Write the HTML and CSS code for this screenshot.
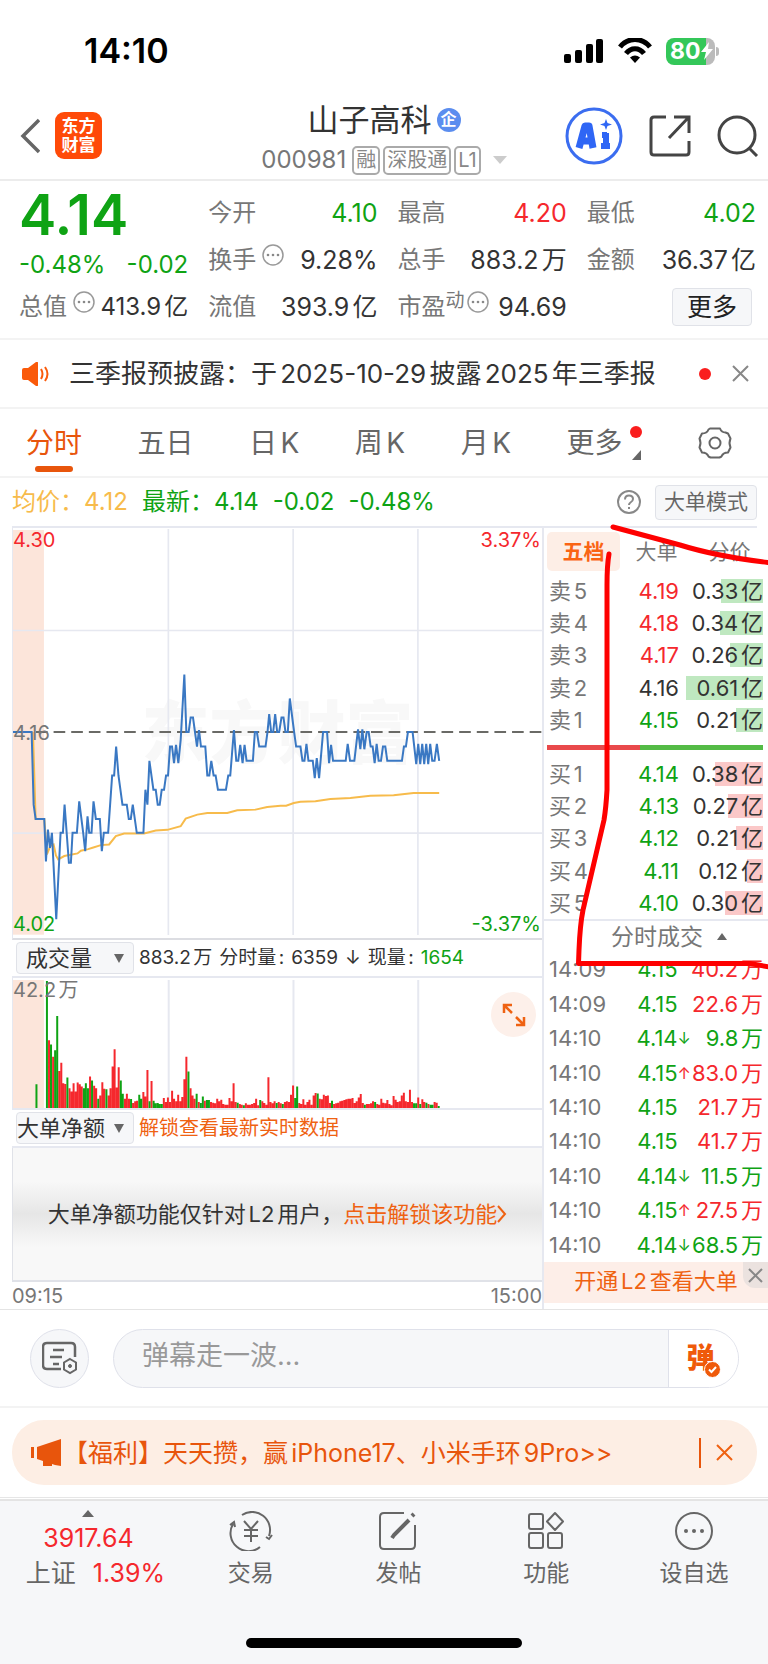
FILE: index.html
```
<!DOCTYPE html>
<html lang="zh-CN">
<head>
<meta charset="utf-8">
<meta name="viewport" content="width=device-width, initial-scale=1">
<title>山子高科 000981</title>
<link rel="stylesheet" href="styles.css">
</head>
<body>
<div class="statusbar">
  <span class="clock">14:10</span>
  <div class="status-icons">
    <svg width="40" height="26" viewBox="0 0 40 26"><rect x="0" y="16" width="7" height="9" rx="2"/><rect x="11" y="12" width="7" height="13" rx="2"/><rect x="22" y="6" width="7" height="19" rx="2"/><rect x="32" y="1" width="7" height="24" rx="2"/></svg>
    <svg width="34" height="26" viewBox="0 0 34 26" fill="none" stroke="#000" stroke-width="5"><path d="M2 9C10-1 24-1 32 9"/><path d="M8 15.500C13 9 21 9 26 15.500"/><path d="M17 25l-5-5.500q5-4 10 0z" fill="#000" stroke="none"/></svg>
    <span class="battery"><span>80</span><svg width="12" height="18" viewBox="0 0 12 18"><path d="M8 0L0 10h5L3 18 12 7H7z" fill="#fff"/></svg></span>
  </div>
</div>

<header class="header">
  <div class="header-left">
    <button class="icon-btn" aria-label="返回"><svg width="20" height="36" viewBox="0 0 20 36" fill="none" stroke="#666" stroke-width="3.500"><path d="M19 2L3 18l16 16"/></svg></button>
    <span class="logo"><span>东方</span><span>财富</span></span>
  </div>
  <div class="titles">
    <h1 class="title">山子高科<span class="qi">企</span></h1>
    <div class="code">000981<span class="tags"><span class="tag">融</span><span class="tag">深股通</span><span class="tag">L1</span></span><svg class="drop" width="14" height="8" viewBox="0 0 14 8"><path d="M0 0h14L7 8z" fill="#ccc"/></svg></div>
  </div>
  <div class="header-right">
    <button class="icon-btn" aria-label="AI"><svg width="58" height="58" viewBox="0 0 58 58"><circle cx="29" cy="29" r="27" fill="#fff" stroke="#3b6df0" stroke-width="3"/><g fill="none" stroke="#2f66f5" stroke-linejoin="round"><path d="M14 41l6-22h4l4 22M16 34h10" stroke-width="7"/><path d="M41 26v14M37 28h5M36 39h9" stroke-width="6"/></g><path d="M41 12l1.500 4L47 17.500 42.500 19 41 23l-1.500-4-4.500-1.500 4.500-1.500z" fill="#2f66f5"/></svg></button>
    <button class="icon-btn" aria-label="分享"><svg width="42" height="42" viewBox="0 0 42 42" fill="none" stroke="#444" stroke-width="3"><path d="M17 2H5q-3 0-3 3v32q0 3 3 3h32q3 0 3-3V26M25 2h15v16M39 3L20 23"/></svg></button>
    <button class="icon-btn" aria-label="搜索"><svg width="42" height="42" viewBox="0 0 42 42" fill="none" stroke="#444" stroke-width="3"><circle cx="20" cy="20" r="18"/><path d="M32 33l8 8"/></svg></button>
  </div>
</header>

<section class="quote">
  <div class="price-block down">
    <div class="price">4.14</div>
    <div class="change"><span>-0.48%</span><span>-0.02</span></div>
  </div>
  <div class="stat"><span class="label">今开</span><span class="down">4.10</span></div>
  <div class="stat"><span class="label">最高</span><span class="up">4.20</span></div>
  <div class="stat"><span class="label">最低</span><span class="down">4.02</span></div>
  <div class="stat"><span class="label">换手<svg class="dots"><use href="#i-dots"/></svg></span><span>9.28%</span></div>
  <div class="stat"><span class="label">总手</span><span>883.2万</span></div>
  <div class="stat"><span class="label">金额</span><span>36.37亿</span></div>
  <div class="stat stat-small"><span class="label">总值<svg class="dots"><use href="#i-dots"/></svg></span><span>413.9亿</span></div>
  <div class="stat"><span class="label">流值</span><span>393.9亿</span></div>
  <div class="stat"><span class="label">市盈<span class="sup">动</span><svg class="dots"><use href="#i-dots"/></svg></span><span>94.69</span></div>
  <div class="stat stat-end"><button class="btn btn-more">更多</button></div>
</section>

<section class="notice">
  <svg width="27" height="24" viewBox="0 0 27 24"><path d="M0 8q0-2 2-2h4l8-6q2-1 2 1v22q0 2-2 1l-8-6H2q-2 0-2-2z" fill="#fa5a0a"/><path d="M19 7q3 5 0 10M23 5q5 7 0 14" fill="none" stroke="#fa5a0a" stroke-width="2"/></svg>
  <a class="notice-text" href="#">三季报预披露：于2025-10-29披露2025年三季报</a>
  <span class="dot"></span>
  <button class="icon-btn" aria-label="关闭"><svg width="17" height="17" viewBox="0 0 17 17" stroke="#888" stroke-width="2"><path d="M1 1l15 15M16 1L1 16"/></svg></button>
</section>

<nav class="tabs">
  <button class="tab active">分时</button>
  <button class="tab">五日</button>
  <button class="tab">日K</button>
  <button class="tab">周K</button>
  <button class="tab">月K</button>
  <button class="tab tab-more">更多<span class="more-marks"><span class="dot"></span><svg width="9" height="10" viewBox="0 0 9 10"><path d="M9 0v10H0z" fill="#666"/></svg></span></button>
  <button class="tab" aria-label="设置"><svg width="34" height="32" viewBox="0 0 34 32" fill="none" stroke="#666" stroke-width="2" stroke-linejoin="round"><path d="M12 1.500h10q1.500 4 5.500 4l2.500 1 2.500 5q-2 4.500 0 9l-2.500 5q-5 0-6.500 4l-2 1h-9l-2-1q-1.500-4-6.500-4l-2.500-5q2-4.500 0-9l2.500-5q5 0 6.500-4z"/><circle cx="17" cy="16" r="5.500"/></svg></button>
</nav>

<div class="info">
  <span class="avg">均价：4.12</span>
  <span class="latest">最新：4.14</span>
  <span class="down">-0.02</span>
  <span class="down info-last">-0.48%</span>
  <button class="icon-btn help" aria-label="帮助"><svg width="24" height="24" viewBox="0 0 24 24" fill="none" stroke="#888" stroke-width="2"><circle cx="12" cy="12" r="11"/><path d="M8 9.500q0-4 4-4t4 3.500q0 2-2.500 3.500-1.500 1-1.500 2.500M12 17v2"/></svg></button>
  <button class="btn btn-mode">大单模式</button>
</div>

<main class="board">
  <div class="charts">
    <div class="chart">
      <span class="watermark">东方财富</span>
      <svg class="plot" viewBox="36 21 1590 1236" preserveAspectRatio="none" fill="none">
        <rect x="36" y="27" width="93" height="1220" fill="#fce5da"/>
        <path d="M36 330H1626M36 941H1626M503 24V1248M878 24V1248M1253 24V1248" stroke="#e6e8f0" stroke-width="5"/>
        <path d="M105 636H1626" stroke="#6a6a66" stroke-width="6" stroke-dasharray="35 18"/>
        <path stroke="#f7bb4b" stroke-width="6" d="M96 636L104 898H130L138 1005 148 980 158 975 165 1008 172 1020 190 1010 230 1002 240 994 262 989 275 985 300 977 325 975 345 950 370 942H430L465 933 500 931 540 920 555 897 590 885 620 880H680L710 872 765 870 800 862 840 858 857 858 880 850 900 846 945 845 990 838 1050 835 1110 828 1180 827 1240 820H1317"/>
        <path stroke="#3a78c3" stroke-width="6" d="M36 636H92L98 855 104 898H130L135 1026 141 930 147 985 153 940 160 1080 166 1200 172 1080 179 940H186L191 855 204 1030H210L215 940H228L235 845 247 940 253 995 260 890 265 940H272L278 845 285 898H297L303 995 309 940H322L334 767H340L346 680 353 767 365 855H378L384 898H390L396 855 408 940H428L434 810 440 855 446 723 458 810H465L471 855H477L483 810H490L496 767H502L508 680H514L520 730 526 675 533 730 540 660 551 463 557 636H564L570 592H577L583 636 589 680 595 630 601 680H614L620 767H626L632 723 639 767H645L652 810H676L683 767H689L700 630 707 723H713L719 675 726 730 732 675 738 723H757L763 636H769L776 680H795L801 636 806 582 812 636H818L824 582 830 636H836L843 592H849L855 636H862L868 535 881 636 887 680H900L906 723H912L918 672 924 723H937L943 775 949 715 956 775 968 636H980L986 730 992 675 998 723H1036L1042 672 1049 723H1062L1073 628 1080 688 1086 628 1092 688 1099 636H1105L1111 680H1117L1123 730 1129 672 1135 723H1142L1148 680H1155L1161 723H1205L1211 680H1217L1223 636H1237L1248 733 1254 672 1260 733 1266 672 1272 733 1278 672 1284 733 1290 672 1296 723H1303L1310 672 1317 723"/>
      </svg>
      <span class="mark top-left up">4.30</span>
      <span class="mark top-right up">3.37%</span>
      <span class="mark mid-left">4.16</span>
      <span class="mark bottom-left down">4.02</span>
      <span class="mark bottom-right down">-3.37%</span>
    </div>

    <div class="toolbar">
      <button class="btn btn-index">成交量<svg width="10" height="9" viewBox="0 0 10 9"><path d="M0 0h10L5 9z" fill="#666"/></svg></button>
      <span>883.2万</span><span>分时量:</span><span>6359</span><span>↓</span><span>现量:</span><span class="down">1654</span>
    </div>

    <div class="chart volume">
      <svg class="plot" viewBox="0 0 530 131" preserveAspectRatio="none">
        <rect width="31" height="129" y="2" fill="#fce5da"/>
        <path d="M156 2V131M281 2V131M406 2V131" stroke="#e6e8f0" stroke-width="2"/>
        <path id="bars-up" stroke="#f5282d" stroke-width="2" fill="none"/>
        <path id="bars-down" stroke="#0fa314" stroke-width="2" fill="none"/>
      </svg>
      <span class="mark top-left">42.2万</span>
      <button class="icon-btn expand" aria-label="展开"><svg width="24" height="24" viewBox="0 0 24 24" fill="none" stroke="#ef6212" stroke-width="2.500"><path d="M2 10V2h8M2 2l8 8M22 14v8h-8M22 22l-8-8"/></svg></button>
    </div>

    <div class="toolbar">
      <button class="btn btn-index btn-tight">大单净额<svg width="10" height="9" viewBox="0 0 10 9"><path d="M0 0h10L5 9z" fill="#666"/></svg></button>
      <a class="orange" href="#">解锁查看最新实时数据</a>
    </div>

    <div class="locked"><span>大单净额功能仅针对L2用户，</span><a class="orange" href="#">点击解锁该功能<svg width="10" height="18" viewBox="0 0 10 18" fill="none" stroke="#ef6212" stroke-width="2"><path d="M1 1l7 8-7 8"/></svg></a></div>
    <div class="axis"><span>09:15</span><span>15:00</span></div>
  </div>

  <aside class="side">
    <div class="side-tabs">
      <button class="side-tab on">五档</button>
      <button class="side-tab">大单</button>
      <button class="side-tab">分价</button>
    </div>
    <table class="book sell">
      <tr><th>卖5</th><td class="up">4.19</td><td class="amt" style="--w:42px">0.33亿</td></tr>
      <tr><th>卖4</th><td class="up">4.18</td><td class="amt" style="--w:43px">0.34亿</td></tr>
      <tr><th>卖3</th><td class="up">4.17</td><td class="amt" style="--w:33px">0.26亿</td></tr>
      <tr><th>卖2</th><td>4.16</td><td class="amt" style="--w:77px">0.61亿</td></tr>
      <tr><th>卖1</th><td class="down">4.15</td><td class="amt" style="--w:27px">0.21亿</td></tr>
    </table>
    <div class="ratio"><span></span></div>
    <table class="book buy">
      <tr><th>买1</th><td class="down">4.14</td><td class="amt" style="--w:48px">0.38亿</td></tr>
      <tr><th>买2</th><td class="down">4.13</td><td class="amt" style="--w:35px">0.27亿</td></tr>
      <tr><th>买3</th><td class="down">4.12</td><td class="amt" style="--w:27px">0.21亿</td></tr>
      <tr><th>买4</th><td class="down">4.11</td><td class="amt" style="--w:16px">0.12亿</td></tr>
      <tr><th>买5</th><td class="down">4.10</td><td class="amt" style="--w:38px">0.30亿</td></tr>
    </table>
    <button class="deals-head">分时成交<svg width="10" height="7" viewBox="0 0 10 7"><path d="M0 7h10L5 0z" fill="#666"/></svg></button>
    <table class="book deals">
      <tr><th>14:09</th><td class="down">4.15</td><td class="arr"></td><td class="up">40.2万</td></tr>
      <tr><th>14:09</th><td class="down">4.15</td><td class="arr"></td><td class="up">22.6万</td></tr>
      <tr><th>14:10</th><td class="down">4.14</td><td class="arr down">↓</td><td class="down">9.8万</td></tr>
      <tr><th>14:10</th><td class="down">4.15</td><td class="arr up">↑</td><td class="up">83.0万</td></tr>
      <tr><th>14:10</th><td class="down">4.15</td><td class="arr"></td><td class="up">21.7万</td></tr>
      <tr><th>14:10</th><td class="down">4.15</td><td class="arr"></td><td class="up">41.7万</td></tr>
      <tr><th>14:10</th><td class="down">4.14</td><td class="arr down">↓</td><td class="down">11.5万</td></tr>
      <tr><th>14:10</th><td class="down">4.15</td><td class="arr up">↑</td><td class="up">27.5万</td></tr>
      <tr><th>14:10</th><td class="down">4.14</td><td class="arr down">↓</td><td class="down">68.5万</td></tr>
    </table>
    <div class="promo"><a class="orange" href="#">开通L2查看大单</a><button class="promo-close" aria-label="关闭"><svg width="15" height="15" viewBox="0 0 15 15" stroke="#888" stroke-width="2"><path d="M1 1l13 13M14 1L1 14"/></svg></button></div>
  </aside>

  <svg class="scribble" width="192" height="446" viewBox="576 524 192 446" fill="none" stroke="#fe0000" stroke-width="5" stroke-linecap="round" stroke-linejoin="round"><path d="M613 527L680 545Q715 556 768 562.500"/><path d="M609 554Q607 565 607 585V790Q606 808 604 820L583 910Q580 925 579 950L578.500 963.500H750L772 967.500"/></svg>
</main>

<form class="comment" onsubmit="return false">
  <button class="round-btn" type="button" aria-label="弹幕设置"><svg width="36" height="34" viewBox="0 0 36 34" fill="none" stroke="#666" stroke-width="2.500"><path d="M19 28H5q-4 0-4-4V6q0-4 4-4h24q4 0 4 4v10M11 9h11M8 16h12M11 23h6"/><path d="M28 18l6 3.500v7L28 32l-6-3.500v-7z" stroke-width="2"/><circle cx="28" cy="25" r="1.500" fill="#666" stroke-width="1"/></svg></button>
  <div class="field">
    <input class="field-input" type="text" aria-label="弹幕" placeholder="弹幕走一波...">
    <button class="send" type="button" aria-label="弹幕开关"><span>弹</span><svg class="send-check" width="17" height="17" viewBox="0 0 17 17"><circle cx="8.500" cy="8.500" r="8" fill="#ef5a0a" stroke="#fff"/><path d="M5 8.500l2.500 2.500L12 6" fill="none" stroke="#fff" stroke-width="2"/></svg></button>
  </div>
</form>

<section class="banner-wrap">
  <div class="banner">
    <svg width="32" height="28" viewBox="0 0 32 28" fill="#e8550c"><rect x="0" y="8" width="3" height="11"/><path d="M6 8L30 0v27l-6-1-3-1v2H12v-5L6 20z"/></svg>
    <a class="banner-text" href="#">【福利】天天攒，赢iPhone17、小米手环9Pro&gt;&gt;</a>
    <span class="banner-rule"></span>
    <button class="icon-btn" aria-label="关闭"><svg width="17" height="17" viewBox="0 0 17 17" stroke="#ef6212" stroke-width="2"><path d="M1 1l15 15M16 1L1 16"/></svg></button>
  </div>
</section>

<nav class="bottom">
  <div class="bottom-row">
    <a class="index" href="#">
      <svg width="12" height="7" viewBox="0 0 12 7"><path d="M0 7h12L6 0z" fill="#666"/></svg>
      <span class="up">3917.64</span>
      <span class="index-name">上证<b class="up">1.39%</b></span>
    </a>
    <a class="item" href="#"><svg width="44" height="40" viewBox="0 0 44 40" fill="none" stroke="#666" stroke-width="2"><path d="M13 4A18 18 0 0 1 40 25M31 36A18 18 0 0 1 4 13M1 14l4-3 1 5M43 24l-3 4-3-2"/><path d="M15 10l7 8 7-8M22 18v13M15 19h14M15 25h14"/></svg>交易</a>
    <a class="item" href="#"><svg width="40" height="40" viewBox="0 0 40 40" fill="none" stroke="#666" stroke-width="2"><path d="M26 2H6Q2 2 2 6v28q0 4 4 4h27q4 0 4-4V14"/><path d="M31 9L16 24l-2 3" stroke-width="4"/><path d="M34 5l2-2" stroke-width="4"/></svg>发帖</a>
    <a class="item" href="#"><svg width="40" height="40" viewBox="0 0 40 40" fill="none" stroke="#666" stroke-width="2"><rect x="3" y="3" width="14" height="15" rx="2"/><rect x="3" y="22" width="14" height="15" rx="2"/><rect x="22" y="22" width="14" height="15" rx="2"/><path d="M29 2l8 8.500-8 8.500-8-8.500z" stroke-linejoin="round"/></svg>功能</a>
    <a class="item" href="#"><svg width="40" height="40" viewBox="0 0 40 40"><circle cx="20" cy="20" r="18" fill="none" stroke="#666" stroke-width="2"/><g fill="#666"><circle cx="12" cy="20" r="2"/><circle cx="20" cy="20" r="2"/><circle cx="28" cy="20" r="2"/></g></svg>设自选</a>
  </div>
  <div class="home"></div>
</nav>

<svg class="defs" width="0" height="0"><symbol id="i-dots" viewBox="0 0 22 22"><circle cx="11" cy="11" r="10" fill="none" stroke="#999" stroke-width="1.500"/><g fill="#888"><circle cx="6" cy="11" r="1.300"/><circle cx="11" cy="11" r="1.300"/><circle cx="16" cy="11" r="1.300"/></g></symbol></svg>
<script src="volume.js"></script>
</body>
</html>
```
FILE: styles.css
```
* { box-sizing: border-box; }
body {
  margin: 0;
  background: #fff;
  color: #333;
  font-family: Inter, "Noto Sans CJK SC", sans-serif;
  font-size: 24px;
  line-height: 32px;
  text-autospace: normal;
}
button, input { font: inherit; color: inherit; margin: 0; padding: 0; border: 0; background: none; }
a { color: inherit; text-decoration: none; }
svg { display: block; flex: none; }
h1 { margin: 0; }
.up { color: #f5282d; }
.down { color: #0fa314; }
.orange { color: #ef6212; }
.icon-btn { display: flex; }
.defs { position: absolute; }
.dot { width: 12px; height: 12px; border-radius: 50%; background: #fa1e1e; }
.btn { background: #f6f7f9; border: 1px solid #e0e2e8; border-radius: 4px; white-space: nowrap; }

.statusbar { height: 84px; padding: 18px 53px 0 84px; display: flex; justify-content: space-between; align-items: center; }
.clock { font-size: 34px; font-weight: 600; color: #000; }
.status-icons { display: flex; align-items: center; gap: 14px; }
.battery {
  position: relative; display: flex; align-items: center; gap: 1px; width: 49px; height: 27px; padding-left: 4px;
  border-radius: 8px; background: linear-gradient(90deg, #34c759 82%, #bbb 82%);
  color: #fff; font-size: 23px; font-weight: 700;
}
.battery::after { content: ""; position: absolute; right: -4px; top: 9px; width: 3px; height: 9px; border-radius: 0 3px 3px 0; background: #bbb; }

.header { display: grid; grid-template-columns: 1fr auto 1fr; align-items: center; height: 97px; padding: 8px 9px 0; border-bottom: 2px solid #ececec; }
.header-left { display: flex; align-items: center; gap: 15px; padding-left: 11px; }
.logo { display: flex; flex-direction: column; align-items: center; justify-content: center; width: 47px; height: 47px; border-radius: 9px; background: #ff4a08; color: #fff; font-size: 17px; line-height: 19px; font-weight: 700; }
.titles { align-self: end; display: flex; flex-direction: column; align-items: center; }
.title { display: flex; align-items: center; gap: 5px; font-size: 31px; font-weight: 400; line-height: 42px; }
.qi { width: 24px; height: 24px; border-radius: 50%; background: #5b8def; color: #fff; font-size: 16px; line-height: 22px; text-align: center; font-weight: 700; }
.code { display: flex; align-items: center; gap: 6px; color: #777; line-height: 38px; }
.tags { display: flex; gap: 3px; }
.tag { border: 2px solid #aaa; border-radius: 5px; color: #888; padding: 0 2px; font-size: 20px; line-height: 25px; }
.drop { margin-left: 6px; }
.header-right { display: flex; justify-content: flex-end; align-items: center; gap: 26px; }

.quote { display: grid; grid-template-columns: repeat(4, 1fr); grid-auto-rows: 47px; column-gap: 20px; padding: 8px 12px 8px 19px; border-bottom: 2px solid #f3f3f3; font-size: 25px; }
.price-block { grid-row: span 2; display: flex; flex-direction: column; justify-content: space-between; }
.price { font-size: 56px; line-height: 52px; font-weight: 600; }
.change { display: flex; justify-content: space-between; font-size: 24px; line-height: 36px; }
.stat { display: flex; justify-content: space-between; align-items: center; white-space: nowrap; }
.stat-small { font-size: 24px; }
.label { display: flex; align-items: center; font-size: 24px; color: #777; }
.dots { width: 22px; height: 22px; align-self: flex-start; margin-left: 6px; }
.sup { align-self: flex-start; font-size: 19px; line-height: 19px; }
.sup + .dots { margin-left: 2px; }
.stat-end { justify-content: flex-end; padding-right: 4px; }
.btn-more { width: 80px; height: 38px; color: #222; }

.notice { display: flex; align-items: center; height: 69px; padding: 0 19px 0 22px; border-bottom: 2px solid #f3f3f3; }
.notice-text { flex: 1; margin-left: 20px; font-size: 26px; white-space: nowrap; }
.notice .icon-btn { margin-left: 21px; }

.tabs { display: flex; justify-content: space-between; height: 69px; padding: 0 36px 0 26px; border-bottom: 2px solid #f3f3f3; font-size: 28px; color: #666; }
.tab { position: relative; display: flex; align-items: center; }
.active { color: #e8550c; }
.active::after { content: ""; position: absolute; left: 9px; right: 9px; bottom: 4px; height: 6px; border-radius: 3px; background: #e8550c; }
.tab-more { gap: 8px; }
.more-marks { display: flex; flex-direction: column; align-items: center; gap: 12px; }

.info { display: flex; align-items: center; gap: 14px; height: 50px; margin: 0 11px 0 12px; border-bottom: 2px solid #e6e8f0; font-size: 24px; white-space: nowrap; }
.avg { color: #f7bb4b; }
.latest { color: #0fa314; }
.info-last { flex: 1; }
.btn-mode { height: 35px; padding: 0 8px; font-size: 21px; line-height: 32px; color: #666; }

.board { position: relative; display: grid; grid-template-columns: minmax(0, 1fr) 226px; border-bottom: 1px solid #e4e4e4; font-size: 22px; }
.charts { margin-left: 12px; }
.chart { position: relative; height: 412px; border-bottom: 2px solid #dcdde2; border-left: 1px solid #e6e8f0; }
.plot { position: relative; width: 100%; height: 100%; }
.watermark { position: absolute; inset: 0; display: flex; align-items: center; justify-content: center; font-size: 68px; font-weight: 900; color: #f8f8f8; }
.mark { position: absolute; font-size: 20px; line-height: 24px; color: #777; }
.mark.up { color: #f5282d; }
.mark.down { color: #0fa314; }
.top-left { left: 0; top: 0; }
.top-right { right: 1px; top: 0; }
.mid-left { left: 0; top: 50%; margin-top: -12px; }
.bottom-left { left: 0; bottom: 2px; }
.bottom-right { right: 1px; bottom: 2px; }
.toolbar { display: flex; align-items: center; gap: 7px; height: 38px; padding-left: 4px; border-bottom: 2px solid #e6e8f0; font-size: 19px; white-space: nowrap; }
.toolbar .orange { font-size: 20px; }
.btn-index { display: flex; align-items: center; justify-content: space-between; width: 118px; height: 32px; padding: 0 9px; font-size: 22px; line-height: 28px; }
.btn-tight { padding: 0 9px 0 0; }
.toolbar .btn-index + * { margin-left: -2px; }
.volume { height: 132px; border-bottom-color: #e6e8f0; }
.expand { position: absolute; right: 6px; top: 14px; width: 45px; height: 45px; align-items: center; justify-content: center; border-radius: 50%; background: #fdf0ea; }
.locked { display: flex; align-items: center; justify-content: center; height: 134px; border: solid #e0e2e8; border-width: 0 0 2px 1px; background: linear-gradient(#f8f8f8 25%, #e6e6e6 50%, #f8f8f8 75%); white-space: nowrap; }
.locked a { display: flex; align-items: center; }
.axis { display: flex; justify-content: space-between; height: 27px; font-size: 20px; line-height: 28px; color: #777; }

.side { border-left: 2px solid #e6e8f0; padding-top: 4px; }
.side-tabs { display: grid; grid-template-columns: repeat(3, 1fr); height: 39px; margin: 0 2px 4px 3px; font-size: 21px; }
.side-tab { color: #777; }
.side-tab.on { background: #fdeee6; border-radius: 5px; color: #fa6414; font-weight: 700; }
.book { width: 100%; height: 161px; border-collapse: collapse; line-height: 24px; }
.book th, .book td { padding: 0; text-align: right; font-weight: 400; white-space: nowrap; }
.book th { width: 68px; padding-left: 5px; text-align: left; color: #777; }
.book .amt { padding-right: 5px; background: linear-gradient(var(--c), var(--c)) no-repeat right 5px center / var(--w) 24px; }
.sell { --c: #bfe8c0; }
.buy { --c: #fbc8c8; }
.book td:nth-child(2) { width: 67px; }
.ratio { height: 22px; padding: 9px 5px 8px 3px; }
.ratio span { display: block; height: 5px; background: linear-gradient(90deg, #e9494b 43%, #54bb46 43%); }
.deals-head { display: flex; align-items: center; justify-content: center; gap: 14px; width: 100%; height: 33px; padding-left: 26px; border-top: 2px solid #e6e8f0; font-size: 23px; color: #777; }
.deals { height: 310px; }
.deals td:last-child { padding-right: 5px; }
.deals .arr { width: 12px; font-size: 16px; text-align: left; }
.promo { position: relative; height: 41px; background: #fdeee8; text-align: center; line-height: 38px; }
.promo-close { position: absolute; right: 0; top: 0; display: flex; align-items: center; justify-content: center; width: 25px; height: 26px; border-bottom-left-radius: 12px; background: #ebe2df; }
.scribble { position: absolute; right: 0; top: -4px; pointer-events: none; }

.comment { display: flex; align-items: center; gap: 24px; height: 98px; padding: 0 29px 0 30px; border-bottom: 2px solid #f3f3f3; }
.round-btn { display: flex; align-items: center; justify-content: center; flex: none; width: 59px; height: 59px; border: 1px solid #dfe1ea; border-radius: 50%; background: #f6f7f9; }
.field { flex: 1; display: flex; height: 59px; border: 1px solid #dfe1ea; border-radius: 30px; background: #f6f7f9; overflow: hidden; }
.field-input { flex: 1; min-width: 0; padding: 0 28px 4px; font-size: 27px; text-autospace: no-autospace; }
.field-input::placeholder { color: #999; opacity: 1; }
.send { position: relative; width: 70px; padding-right: 6px; border-left: 1px solid #dfe1ea; background: #fff; color: #ef5a0a; font-size: 28px; font-weight: 900; }
.send-check { position: absolute; left: 35px; top: 31px; }

.banner-wrap { padding: 12px 11px 12px 12px; border-bottom: 1px solid #e6e6e6; }
.banner { display: flex; align-items: center; height: 65px; padding: 0 24px 0 19px; border-radius: 32px; background: #fdeee4; color: #e8550c; font-size: 25px; }
.banner-text { flex: 1; white-space: nowrap; }
.banner-rule { width: 2px; height: 30px; margin-right: 15px; background: #e8550c; }

.bottom { display: flex; flex-direction: column; justify-content: space-between; align-items: center; height: 165px; margin-top: 1px; padding: 9px 0 16px; border-top: 2px solid #e4e4e4; background: #f6f7f9; color: #666; }
.bottom-row { display: grid; grid-template-columns: 177fr 148fr 148fr 148fr 148fr; width: 100%; }
.index { display: flex; flex-direction: column; align-items: center; gap: 1px; font-size: 25px; line-height: 34px; white-space: nowrap; }
.index svg { margin-bottom: 3px; }
.index-name { padding-left: 14px; }
.index b { margin-left: 14px; font-weight: 400; }
.item { display: flex; flex-direction: column; align-items: center; gap: 6px; padding-top: 1px; font-size: 23px; line-height: 32px; }
.home { width: 36%; height: 10px; border-radius: 5px; background: #000; }
```
FILE: volume.js
```
// Per-minute volume; negative values are falling minutes.
const volumes = [-384,205,-192,155,-175,-278,112,137,75,73,-92,60,50,75,50,77,72,65,-60,-75,-60,95,-83,67,60,-28,38,78,58,-57,38,60,125,178,62,123,-83,-43,28,43,28,-27,15,20,22,-40,-28,48,35,115,-20,82,-22,-14,-15,-12,-12,30,18,32,18,52,28,20,40,20,33,87,155,-110,60,38,28,-43,18,-15,-35,22,-24,-24,18,16,14,28,20,25,12,10,10,30,20,75,18,-16,12,10,-8,14,10,10,12,15,28,8,-24,20,15,10,93,18,14,20,-15,18,14,-12,18,20,18,40,68,-30,-65,15,12,26,10,18,25,10,38,45,-44,28,26,40,36,38,15,-22,12,14,16,20,22,24,26,28,28,30,15,20,32,42,15,-10,12,12,14,20,-18,12,10,28,16,14,24,12,8,36,25,18,20,38,46,20,18,55,18,-14,-14,32,-12,26,18,-16,12,-10,-10,18,16,-6];
const path = { up: "M22.500 0", down: "M23.500 131V107" };
volumes.forEach((v, i) => {
  const x = (34 + i * 2.055).toFixed(1);
  path[v < 0 ? "down" : "up"] += `M${x} 131V${(131 - Math.abs(v) / 3).toFixed(1)}`;
});
document.getElementById("bars-up").setAttribute("d", path.up);
document.getElementById("bars-down").setAttribute("d", path.down);
```
